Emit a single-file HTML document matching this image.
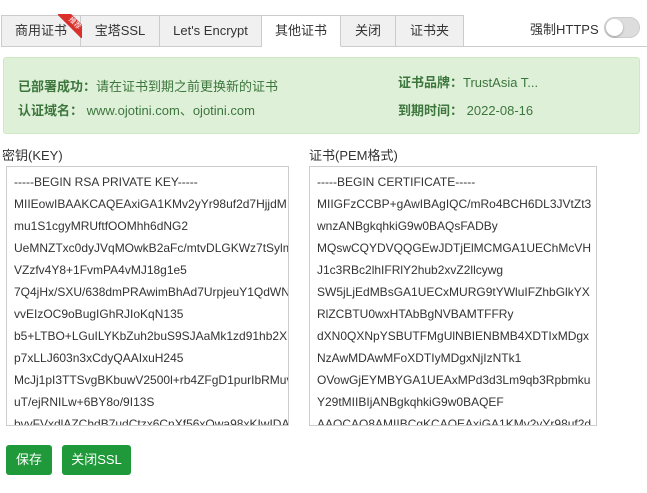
<!DOCTYPE html>
<html><head><meta charset="utf-8"><style>
*{margin:0;padding:0;box-sizing:border-box}
body{width:647px;height:493px;background:#fff;font-family:"Liberation Sans","Noto Sans CJK SC",sans-serif;font-size:13px;color:#333;position:relative;overflow:hidden}
.tabs{position:absolute;left:1px;top:15px;height:32px;display:flex}
.tab{height:32px;border:1px solid #ccc;border-left:none;background:#f0f0f0;text-align:center;line-height:30px;font-size:13px;color:#333;position:relative}
.tab:first-child{border-left:1px solid #ccc}
.tab.on{background:#fff;border-bottom-color:#fff}
.line{position:absolute;left:1px;right:0;top:46px;border-top:1px solid #ccc}
.rib{position:absolute;left:58px;top:14px;width:24px;height:24px;overflow:hidden}
.rib div{position:absolute;left:-3px;top:5px;width:38px;height:10px;background:#d9302c;transform:rotate(45deg);color:#fff;font-size:7px;line-height:10px;text-align:center}
.tog{position:absolute;left:604px;top:17px;width:36px;height:21px;border-radius:11px;background:#ddd;border:1px solid #ccc}
.tog i{position:absolute;left:1px;top:1px;width:17px;height:17px;border-radius:50%;background:#fff;box-shadow:0 1px 2px rgba(0,0,0,.3)}
.box{position:absolute;left:3px;top:57px;width:637px;height:77px;background:#dff0d8;border:1px solid #cfe8c4;border-radius:3px;color:#3c763d;font-size:13px}
.box span{position:absolute}
b{font-weight:bold}
.lab{position:absolute;font-size:13px;color:#333}
.ta{position:absolute;top:166px;height:260px;border:1px solid #ccc;overflow:hidden;padding:4px 0 0 7px;font-size:12px;line-height:22px;color:#333;white-space:nowrap}
.btn{position:absolute;top:445px;height:30px;background:#20993a;color:#fff;border-radius:3px;text-align:center;line-height:30px;font-size:13px}
</style></head><body>
<div class="line"></div>
<div class="tabs">
<div class="tab" style="width:80px">商用证书</div>
<div class="tab" style="width:79px">宝塔SSL</div>
<div class="tab" style="width:102px">Let's Encrypt</div>
<div class="tab on" style="width:79px">其他证书</div>
<div class="tab" style="width:55px">关闭</div>
<div class="tab" style="width:68px">证书夹</div>
</div>
<div class="rib"><div>推荐</div></div>
<div style="position:absolute;left:530px;top:19px;font-size:13px">强制HTTPS</div>
<div class="tog"><i></i></div>
<div class="box">
<span style="left:14px;top:18px"><b>已部署成功：</b>请在证书到期之前更换新的证书</span>
<span style="left:14px;top:42px"><b>认证域名：</b> www.ojotini.com、ojotini.com</span>
<span style="left:394px;top:14px"><b>证书品牌：</b>TrustAsia T...</span>
<span style="left:394px;top:42px"><b>到期时间：</b> 2022-08-16</span>
</div>
<div class="lab" style="left:2px;top:145px">密钥(KEY)</div>
<div class="lab" style="left:309px;top:145px">证书(PEM格式)</div>
<div class="ta" style="left:6px;width:283px">-----BEGIN RSA PRIVATE KEY-----<br>MIIEowIBAAKCAQEAxiGA1KMv2yYr98uf2d7HjjdM<br>mu1S1cgyMRUftfOOMhh6dNG2<br>UeMNZTxc0dyJVqMOwkB2aFc/mtvDLGKWz7tSylm<br>VZzfv4Y8+1FvmPA4vMJ18g1e5<br>7Q4jHx/SXU/638dmPRAwimBhAd7UrpjeuY1QdWN<br>vvEIzOC9oBugIGhRJIoKqN135<br>b5+LTBO+LGuILYKbZuh2buS9SJAaMk1zd91hb2X<br>p7xLLJ603n3xCdyQAAIxuH245<br>McJj1pI3TTSvgBKbuwV2500l+rb4ZFgD1purIbRMuv<br>uT/ejRNILw+6BY8o/9I13S<br>bvyFVxdlAZChdB7udCtzx6CnXf56xOwa98xKIwIDA</div>
<div class="ta" style="left:309px;width:288px">-----BEGIN CERTIFICATE-----<br>MIIGFzCCBP+gAwIBAgIQC/mRo4BCH6DL3JVtZt3<br>wnzANBgkqhkiG9w0BAQsFADBy<br>MQswCQYDVQQGEwJDTjElMCMGA1UEChMcVH<br>J1c3RBc2lhIFRlY2hub2xvZ2llcywg<br>SW5jLjEdMBsGA1UECxMURG9tYWluIFZhbGlkYX<br>RlZCBTU0wxHTAbBgNVBAMTFFRy<br>dXN0QXNpYSBUTFMgUlNBIENBMB4XDTIxMDgx<br>NzAwMDAwMFoXDTIyMDgxNjIzNTk1<br>OVowGjEYMBYGA1UEAxMPd3d3Lm9qb3Rpbmku<br>Y29tMIIBIjANBgkqhkiG9w0BAQEF<br>AAOCAQ8AMIIBCgKCAQEAxiGA1KMv2yYr98uf2d</div>
<div class="btn" style="left:6px;width:46px">保存</div>
<div class="btn" style="left:62px;width:69px">关闭SSL</div>
</body></html>
